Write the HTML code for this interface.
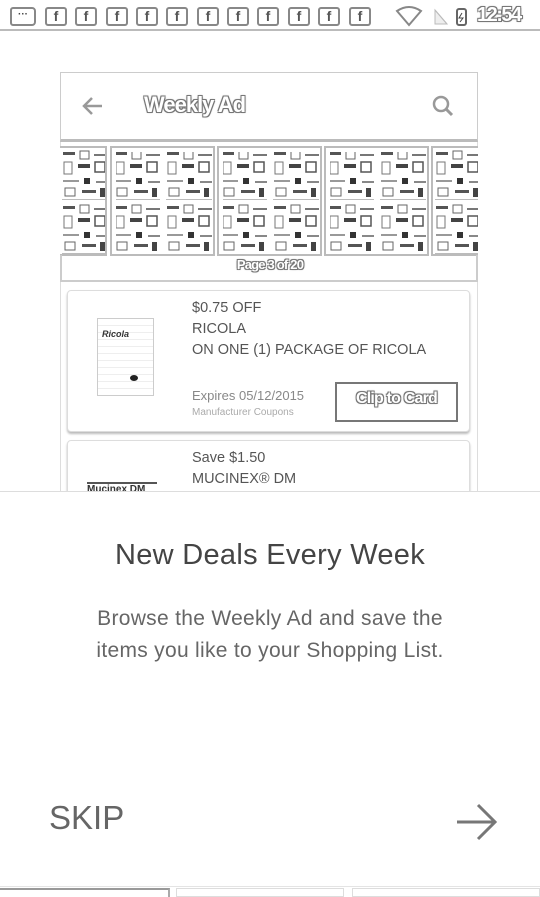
<!DOCTYPE html>
<html><head><meta charset="utf-8">
<style>
*{margin:0;padding:0;box-sizing:border-box}
html,body{width:540px;height:897px;overflow:hidden;background:#fff;font-family:"Liberation Sans","DejaVu Sans",sans-serif;position:relative}
.abs{position:absolute}
.outline{color:#fff;text-shadow:-1px -1px 0 #777,1px -1px 0 #777,-1px 1px 0 #777,1px 1px 0 #777,0 0 2px #555;font-weight:bold}
.fb{position:absolute;top:7px;width:22px;height:19px;border:2px solid #888;border-radius:3px;font-size:14px;font-weight:bold;color:#555;text-align:center;line-height:15px}
.thumb{position:absolute;top:146px;height:110px;border:2px solid #bbb;background:#fff;overflow:hidden}
.card{position:absolute;left:67px;width:403px;border:1px solid #ddd;border-radius:4px;box-shadow:0 2px 2px #bbb;background:#fff}
.ct{font-size:14.5px;color:#555;line-height:21px}
</style></head><body>

<div class="abs" style="left:10px;top:7px;width:26px;height:19px;border:2px solid #888;border-radius:3px 4px 4px 3px;font-size:10px;color:#444;text-align:center;line-height:12px;font-weight:bold">···</div>
<div class="fb" style="left:45px">f</div><div class="fb" style="left:75px">f</div><div class="fb" style="left:106px">f</div><div class="fb" style="left:136px">f</div><div class="fb" style="left:166px">f</div><div class="fb" style="left:197px">f</div><div class="fb" style="left:227px">f</div><div class="fb" style="left:257px">f</div><div class="fb" style="left:288px">f</div><div class="fb" style="left:318px">f</div><div class="fb" style="left:349px">f</div>
<svg class="abs" style="left:395px;top:5px" width="72" height="22"><path d="M2 6 Q14 -2 26 6 L14 20 Z" fill="#fff" stroke="#888" stroke-width="2"/><path d="M40 5 L40 19 L52 19 Z" fill="#eee" stroke="#bbb"/><path d="M40 5 L52 19" stroke="#bbb"/><rect x="62" y="4" width="9" height="16" rx="2" fill="#fff" stroke="#666" stroke-width="2"/><path d="M67 8 L64 13 L68 13 L65 17" stroke="#444" fill="none"/></svg>
<div class="abs outline" style="left:477px;top:4px;font-size:20px;letter-spacing:-1.5px">12:54</div>
<div class="abs" style="left:0;top:29px;width:540px;height:2px;background:#bbb"></div>

<div class="abs" style="left:60px;top:72px;width:418px;height:420px;border-left:1px solid #ddd;border-right:1px solid #ddd"></div>
<div class="abs" style="left:60px;top:72px;width:418px;height:70px;border:1px solid #ccc;border-bottom:3px solid #bbb;background:#fff"></div>
<svg class="abs" style="left:80px;top:94px" width="26" height="24"><path d="M22 12 H5 M12 4 L4 12 L12 20" fill="none" stroke="#999" stroke-width="2.5"/></svg>
<div class="abs outline" style="left:144px;top:92px;font-size:22px;letter-spacing:-1px">Weekly Ad</div>
<svg class="abs" style="left:430px;top:93px" width="26" height="26"><circle cx="11" cy="11" r="7" fill="#fff" stroke="#999" stroke-width="2.5"/><path d="M16 16 L22 22" stroke="#999" stroke-width="3"/></svg>

<svg width="0" height="0" style="position:absolute"><defs>
<pattern id="ad" width="52" height="54" patternUnits="userSpaceOnUse">
<rect x="3" y="4" width="12" height="3" fill="#555"/><rect x="20" y="3" width="9" height="8" fill="none" stroke="#666"/><rect x="34" y="6" width="14" height="2" fill="#777"/>
<rect x="4" y="14" width="8" height="12" fill="none" stroke="#777"/><rect x="18" y="16" width="12" height="4" fill="#444"/><rect x="35" y="14" width="10" height="10" fill="none" stroke="#555" stroke-width="1.5"/>
<rect x="3" y="32" width="16" height="2" fill="#999"/><rect x="24" y="30" width="6" height="6" fill="#333"/><rect x="36" y="33" width="12" height="2" fill="#888"/>
<rect x="5" y="40" width="10" height="8" fill="none" stroke="#666"/><rect x="22" y="42" width="14" height="3" fill="#555"/><rect x="40" y="40" width="5" height="9" fill="#444"/>
<rect x="2" y="51" width="46" height="1" fill="#bbb"/></pattern></defs></svg>
<div class="thumb" style="left:60px;width:47px;border-left:none"><svg width="100%" height="100%"><rect width="100%" height="100%" fill="url(#ad)"/></svg></div>
<div class="thumb" style="left:110px;width:105px"><svg width="100%" height="100%"><rect x="4" y="4" width="96" height="100" fill="url(#ad)"/></svg></div>
<div class="thumb" style="left:217px;width:105px"><svg width="100%" height="100%"><rect x="4" y="4" width="96" height="100" fill="url(#ad)"/></svg></div>
<div class="thumb" style="left:324px;width:105px"><svg width="100%" height="100%"><rect x="4" y="4" width="96" height="100" fill="url(#ad)"/></svg></div>
<div class="thumb" style="left:431px;width:47px;border-right:none"><svg width="100%" height="100%"><rect width="100%" height="100%" fill="url(#ad)"/></svg></div>
<div class="abs" style="left:60px;top:255px;width:418px;height:27px;border:2px solid #ccc;border-top:none"></div>
<div class="abs outline" style="left:0;width:540px;top:257px;text-align:center;font-size:13px;letter-spacing:-0.8px">Page 3 of 20</div>

<div class="card" style="top:290px;height:142px"></div>
<div class="abs" style="left:97px;top:318px;width:57px;height:78px;border:1px solid #ccc;background:repeating-linear-gradient(0deg,#fff 0 6px,#eee 6px 7px)"><div style="margin:10px 4px;font-size:9px;font-weight:bold;color:#333;font-style:italic">Ricola</div><div style="position:absolute;left:32px;top:56px;width:8px;height:6px;background:#222;border-radius:50%"></div></div>
<div class="abs ct" style="left:192px;top:298px">$0.75 OFF<br>RICOLA<br>ON ONE (1) PACKAGE OF RICOLA</div>
<div class="abs" style="left:192px;top:388px;font-size:13px;color:#888">Expires 05/12/2015</div>
<div class="abs" style="left:192px;top:407px;font-size:10px;color:#aaa">Manufacturer Coupons</div>
<div class="abs" style="left:335px;top:382px;width:123px;height:40px;border:2px solid #777"></div>
<div class="abs outline" style="left:335px;top:390px;width:123px;text-align:center;font-size:16px;letter-spacing:-0.8px">Clip to Card</div>

<div class="card" style="top:440px;height:80px"></div>
<div class="abs ct" style="left:192px;top:448px">Save $1.50<br>MUCINEX® DM</div>
<div class="abs" style="left:87px;top:482px;width:70px;height:10px;border-top:2px solid #555;font-size:10px;color:#333;font-weight:bold">Mucinex DM</div>

<div class="abs" style="left:0;top:491px;width:540px;height:406px;background:#fff;border-top:1px solid #ddd"></div>
<div class="abs" style="left:0;width:540px;top:539px;text-align:center;font-size:29px;color:#444;letter-spacing:0.3px">New Deals Every Week</div>
<div class="abs" style="left:0;width:540px;top:603px;text-align:center;font-size:21px;color:#666;line-height:32px;letter-spacing:0.3px">Browse the Weekly Ad and save the<br>items you like to your Shopping List.</div>
<div class="abs" style="left:49px;top:799px;font-size:33px;color:#666">SKIP</div>
<svg class="abs" style="left:450px;top:800px" width="50" height="44"><path d="M7 22 H44 M28 5 L45 22 L28 39" fill="none" stroke="#777" stroke-width="3"/></svg>

<div class="abs" style="left:0;top:886px;width:540px;height:1px;background:#e4e4e4"></div>
<div class="abs" style="left:0;top:888px;width:170px;height:9px;border-top:2px solid #999;border-right:2px solid #aaa"></div>
<div class="abs" style="left:176px;top:888px;width:168px;height:9px;border:1px solid #ddd"></div>
<div class="abs" style="left:352px;top:888px;width:188px;height:9px;border:1px solid #ddd"></div>
</body></html>
